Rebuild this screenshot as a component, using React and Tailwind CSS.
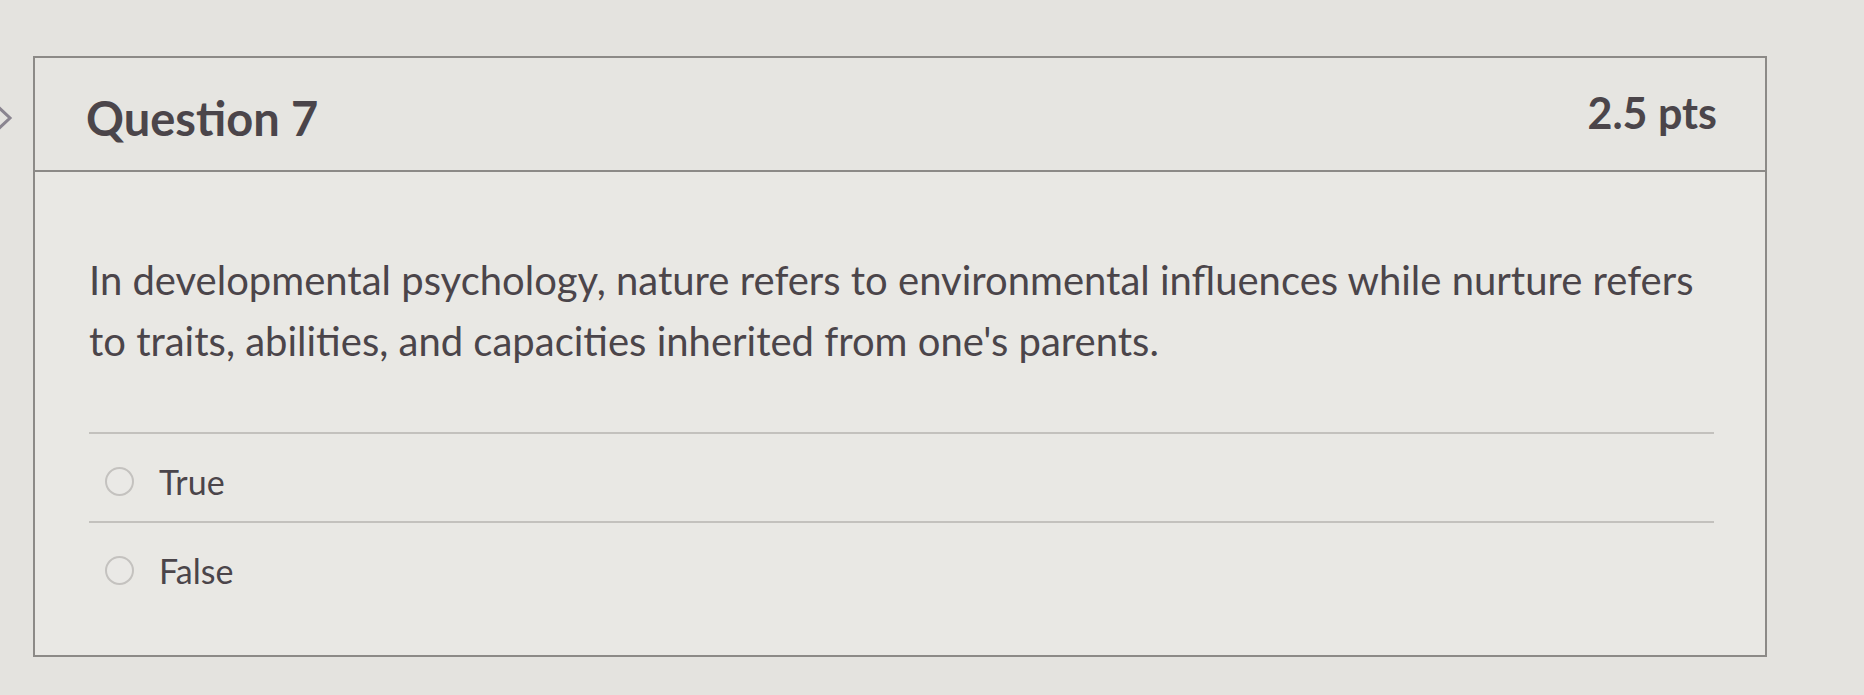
import React from 'react';

const answers = ['True', 'False'];

function Chevron() {
  return (
    <svg width="33" height="40" viewBox="0 0 33 40" className="shrink-0 mt-[44px]">
      <polyline points="-6,3 10,18 -6,33" fill="none" stroke="#8a8590" strokeWidth="3" />
    </svg>
  );
}

export default function App() {
  return (
    <div className="w-[1864px] h-[695px] bg-[#e4e3df] font-['Lato',sans-serif] text-[#4b454a] overflow-hidden">
      <div className="flex pt-[56px]">
        <Chevron />
        <div className="w-[1734px] h-[601px] border-2 border-[#8c8a87] bg-[#e9e8e4] flex flex-col">
          <div className="h-[114px] flex items-center justify-between pl-[51px] pr-[48px] bg-[#e6e5e1] border-b-2 border-[#8c8a87]">
            <h2 className="text-[47px] font-bold leading-none mt-[8px]">Question 7</h2>
            <div className="text-[43px] font-bold leading-none -mt-[4px]">2.5 pts</div>
          </div>
          <div className="pl-[54px] pr-[51px] pt-[78px]">
            <p className="text-[40px] leading-[61px]">
              In developmental psychology, nature refers to environmental influences while nurture refers to traits, abilities, and capacities inherited from one's parents.
            </p>
            <div className="mt-[60px]">
              {answers.map((a) => (
                <div key={a} className="flex items-center h-[89px] border-t-2 border-[#c3c1bd] pt-[8px]">
                  <span className="ml-[16px] w-[29px] h-[29px] rounded-full border-2 border-[#c4c2bf] bg-[#eae9e6]" />
                  <span className="ml-[25px] text-[34px] leading-none">{a}</span>
                </div>
              ))}
            </div>
          </div>
        </div>
      </div>
    </div>
  );
}
